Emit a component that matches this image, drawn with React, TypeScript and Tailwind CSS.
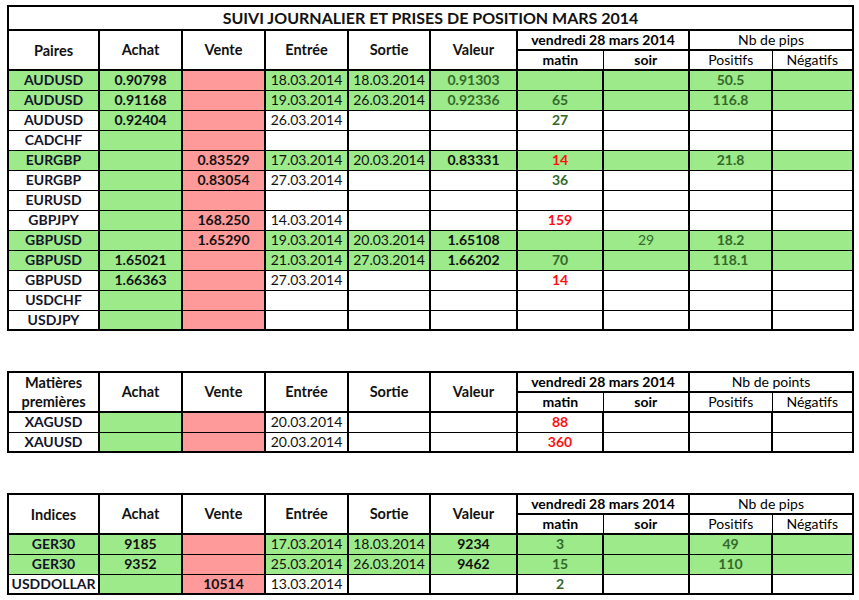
type Row = {
  pair: string;
  achat?: string;
  vente?: string;
  entree?: string;
  sortie?: string;
  valeur?: string;
  valeurGreen?: boolean;
  matin?: string;
  matinRed?: boolean;
  soir?: string;
  pos?: string;
  active?: boolean;
};

const pairs: Row[] = [
  { pair: "AUDUSD", achat: "0.90798", entree: "18.03.2014", sortie: "18.03.2014", valeur: "0.91303", valeurGreen: true, pos: "50.5", active: true },
  { pair: "AUDUSD", achat: "0.91168", entree: "19.03.2014", sortie: "26.03.2014", valeur: "0.92336", valeurGreen: true, matin: "65", pos: "116.8", active: true },
  { pair: "AUDUSD", achat: "0.92404", entree: "26.03.2014", matin: "27" },
  { pair: "CADCHF" },
  { pair: "EURGBP", vente: "0.83529", entree: "17.03.2014", sortie: "20.03.2014", valeur: "0.83331", matin: "14", matinRed: true, pos: "21.8", active: true },
  { pair: "EURGBP", vente: "0.83054", entree: "27.03.2014", matin: "36" },
  { pair: "EURUSD" },
  { pair: "GBPJPY", vente: "168.250", entree: "14.03.2014", matin: "159", matinRed: true },
  { pair: "GBPUSD", vente: "1.65290", entree: "19.03.2014", sortie: "20.03.2014", valeur: "1.65108", soir: "29", pos: "18.2", active: true },
  { pair: "GBPUSD", achat: "1.65021", entree: "21.03.2014", sortie: "27.03.2014", valeur: "1.66202", matin: "70", pos: "118.1", active: true },
  { pair: "GBPUSD", achat: "1.66363", entree: "27.03.2014", matin: "14", matinRed: true },
  { pair: "USDCHF" },
  { pair: "USDJPY" },
];

const matieres: Row[] = [
  { pair: "XAGUSD", entree: "20.03.2014", matin: "88", matinRed: true },
  { pair: "XAUUSD", entree: "20.03.2014", matin: "360", matinRed: true },
];

const indices: Row[] = [
  { pair: "GER30", achat: "9185", entree: "17.03.2014", sortie: "18.03.2014", valeur: "9234", matin: "3", pos: "49", active: true },
  { pair: "GER30", achat: "9352", entree: "25.03.2014", sortie: "26.03.2014", valeur: "9462", matin: "15", pos: "110", active: true },
  { pair: "USDDOLLAR", vente: "10514", entree: "13.03.2014", matin: "2" },
];

const GREEN = "bg-[#9cea8a]";
const PINK = "bg-[#ff9a9a]";

function Cols() {
  return (
    <colgroup>
      <col className="w-[91px]" />
      <col className="w-[83px]" />
      <col className="w-[83px]" />
      <col className="w-[83px]" />
      <col className="w-[82px]" />
      <col className="w-[87px]" />
      <col className="w-[86px]" />
      <col className="w-[86px]" />
      <col className="w-[83px]" />
      <col className="w-[81px]" />
    </colgroup>
  );
}

function Header({ first, unit }: { first: React.ReactNode; unit: string }) {
  const main = "border-2 border-black font-bold text-[14.5px] text-[#111]";
  return (
    <>
      <tr className="h-[20px]">
        <td rowSpan={2} className={main + " leading-[19px]"}>{first}</td>
        <td rowSpan={2} className={main}>Achat</td>
        <td rowSpan={2} className={main}>Vente</td>
        <td rowSpan={2} className={main}>Entrée</td>
        <td rowSpan={2} className={main}>Sortie</td>
        <td rowSpan={2} className={main}>Valeur</td>
        <td colSpan={2} className="border-2 border-black font-bold text-[14px] leading-none">vendredi 28 mars 2014</td>
        <td colSpan={2} className="border-2 border-black text-[14px] leading-none">{unit}</td>
      </tr>
      <tr className="h-[20px]">
        <td className="border border-black border-b-2 font-bold text-[14px] leading-none">matin</td>
        <td className="border border-black border-b-2 border-r-2 font-bold text-[14px] leading-none">soir</td>
        <td className="border border-black border-b-2 text-[14px] leading-none">Positifs</td>
        <td className="border border-black border-b-2 text-[14px] leading-none">Négatifs</td>
      </tr>
    </>
  );
}

function DataRow({ r }: { r: Row }) {
  const bg = r.active ? GREEN : "bg-white";
  const c = "border-y border-x-2 border-black h-[20px] p-0 leading-none text-[14px] whitespace-nowrap";
  return (
    <tr className="h-[20px]">
      <td className={`${c} ${bg} font-bold text-[#14142a]`}>{r.pair}</td>
      <td className={`${c} ${GREEN} font-bold text-[#111]`}>{r.achat}</td>
      <td className={`${c} ${PINK} font-bold text-[#111]`}>{r.vente}</td>
      <td className={`${c} ${bg} text-[#111]`}>{r.entree}</td>
      <td className={`${c} ${bg} text-[#111]`}>{r.sortie}</td>
      <td className={`${c} ${bg} font-bold ${r.valeurGreen ? "text-[#34682a]" : "text-[#111]"}`}>{r.valeur}</td>
      <td className={`${c} ${bg} font-bold ${r.matinRed ? "text-[#ff1010]" : "text-[#34682a]"}`}>{r.matin}</td>
      <td className={`${c} ${bg} text-[#34682a]`}>{r.soir}</td>
      <td className={`${c} ${bg} font-bold text-[#34682a]`}>{r.pos}</td>
      <td className={`${c} ${bg}`}></td>
    </tr>
  );
}

function Table({ rows, first, unit, title }: { rows: Row[]; first: React.ReactNode; unit: string; title?: string }) {
  return (
    <table className="table-fixed border-collapse border-2 border-black w-[845px] text-center">
      <Cols />
      <tbody>
        {title && (
          <tr className="h-[24px]">
            <td colSpan={10} className="border-2 border-black font-bold text-[16px] leading-none text-[#111]">
              {title}
            </td>
          </tr>
        )}
        <Header first={first} unit={unit} />
        {rows.map((r, i) => (
          <DataRow key={i} r={r} />
        ))}
      </tbody>
    </table>
  );
}

export default function App() {
  return (
    <div className="w-[859px] h-[600px] bg-white font-['Lato',sans-serif] pl-[7px] pt-[5px] flex flex-col gap-[40px] overflow-hidden">
      <Table rows={pairs} first="Paires" unit="Nb de pips" title="SUIVI JOURNALIER ET PRISES DE POSITION MARS 2014" />
      <Table
        rows={matieres}
        first={
          <span className="block">
            Matières
            <br />
            premières
          </span>
        }
        unit="Nb de points"
      />
      <Table rows={indices} first="Indices" unit="Nb de pips" />
    </div>
  );
}
